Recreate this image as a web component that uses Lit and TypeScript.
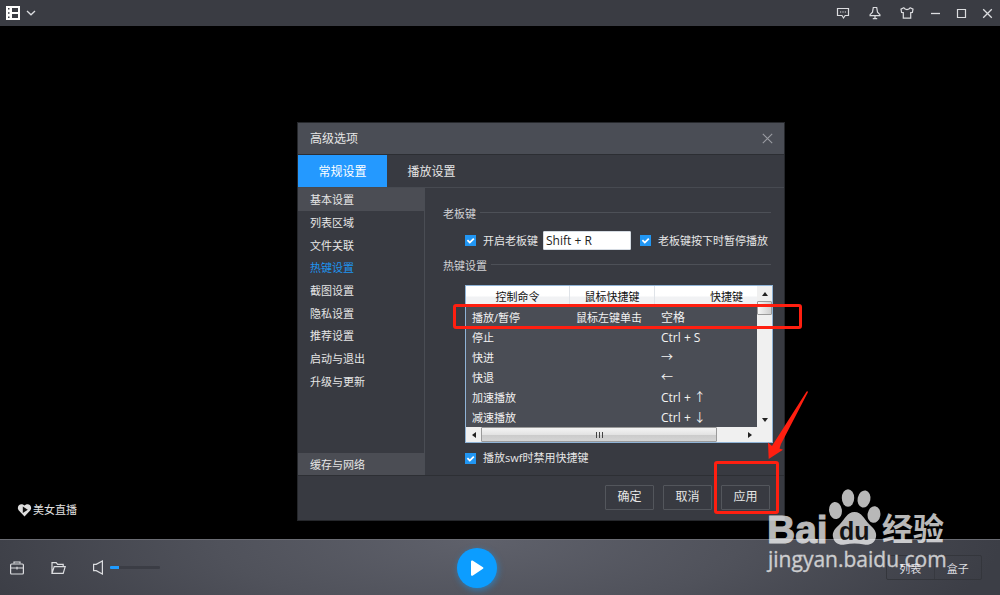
import { LitElement, html, css, svg } from "lit";
import { customElement, state } from "lit/decorators.js";
import { classMap } from "lit/directives/class-map.js";

interface Hotkey {
  command: string;
  mouse: string;
  key: string;
}

const CATEGORIES = [
  "基本设置",
  "列表区域",
  "文件关联",
  "热键设置",
  "截图设置",
  "隐私设置",
  "推荐设置",
  "启动与退出",
  "升级与更新",
];

const HOTKEYS: Hotkey[] = [
  { command: "播放/暂停", mouse: "鼠标左键单击", key: "空格" },
  { command: "停止", mouse: "", key: "Ctrl + S" },
  { command: "快进", mouse: "", key: "→" },
  { command: "快退", mouse: "", key: "←" },
  { command: "加速播放", mouse: "", key: "Ctrl + ↑" },
  { command: "减速播放", mouse: "", key: "Ctrl + ↓" },
];

const reset = css`
  * {
    box-sizing: border-box;
  }
  button,
  input {
    font: inherit;
    color: inherit;
    margin: 0;
  }
  button {
    padding: 0;
    border: 0;
    background: none;
    display: flex;
    align-items: center;
    justify-content: center;
  }
  svg {
    display: block;
    fill: none;
    stroke: currentColor;
  }
`;

@customElement("title-bar")
export class TitleBar extends LitElement {
  static styles = [
    reset,
    css`
      :host {
        display: flex;
        align-items: center;
        justify-content: space-between;
        height: 26px;
        padding: 0 5px;
        background: #3a3c43;
        color: #dcdde0;
      }
      .menu {
        gap: 5px;
      }
      .tools {
        display: flex;
        gap: 11px;
      }
      .tools button {
        width: 15px;
        height: 16px;
      }
      .tools .social {
        width: 21px;
      }
    `,
  ];

  render() {
    return html`
      <button class="menu" aria-label="主菜单">
        <svg width="16" height="16" viewBox="0 0 16 16">
          <rect x="1" y="1" width="14" height="14" fill="#fff" stroke="none" />
          <path d="M7 3h6v4H7zM7 9h6v4H7z" fill="#3a3c43" stroke="none" />
          <path d="M3 3h1.500v1.500H3zM3 7.200h1.500v1.500H3zM3 11.500h1.500V13H3z" fill="#3a3c43" stroke="none" />
        </svg>
        <svg width="10" height="6" viewBox="0 0 10 6" stroke-width="1.3"><path d="M1 1l4 3.800L9 1" /></svg>
      </button>
      <div class="tools">
        <button class="social" aria-label="反馈">
          <svg width="14" height="14" viewBox="0 0 14 14" stroke-width="1.2">
            <path d="M1.500 2.500h11v7H9.200L7.500 12 6 9.500H1.500z" />
            <path d="M4 6h1.200M6.400 6h1.200M8.800 6H10" />
          </svg>
        </button>
        <button class="social" aria-label="置顶">
          <svg width="14" height="14" viewBox="0 0 14 14" stroke-width="1.2">
            <path d="M5.300 1.500h3.400l.8 4.600 2.400 2.600v.9H2.100v-.9l2.400-2.600zM7 9.800v2.500M4.800 12.600h4.400" />
          </svg>
        </button>
        <button class="social" aria-label="换肤">
          <svg width="14" height="14" viewBox="0 0 14 14" stroke-width="1.2">
            <path d="M3.800 1.800C5 4.200 9 4.200 10.200 1.800L13 3.200l-.6 3.200-1.700.2v5.600H3.300V6.600l-1.700-.2L1 3.200z" />
          </svg>
        </button>
        <button aria-label="最小化">
          <svg width="11" height="11" viewBox="0 0 11 11" stroke-width="1.3"><path d="M1 5.500h9" /></svg>
        </button>
        <button aria-label="最大化">
          <svg width="11" height="11" viewBox="0 0 11 11" stroke-width="1.2"><path d="M1.500 1.500h8v8h-8z" /></svg>
        </button>
        <button aria-label="关闭">
          <svg width="11" height="11" viewBox="0 0 11 11" stroke-width="1.3"><path d="M1.200 1.200l8.600 8.600M9.800 1.200l-8.600 8.600" /></svg>
        </button>
      </div>
    `;
  }
}

@customElement("hotkey-list")
export class HotkeyList extends LitElement {
  static styles = [
    reset,
    css`
      :host {
        display: grid;
        grid-template-columns: minmax(0, 1fr) 15px;
        grid-template-rows: auto 15px;
        border: 1px solid #8fb3d6;
        background: #f0f0f0;
      }
      .view {
        overflow: hidden;
        background: #4a4d55;
      }
      table {
        width: 333px;
        table-layout: fixed;
        border-collapse: separate;
        border-spacing: 0;
        line-height: 16px;
      }
      .command {
        width: 104px;
      }
      .mouse {
        width: 85px;
      }
      th {
        height: 21px;
        padding: 0;
        font-weight: 400;
        color: #111;
        background: linear-gradient(#fff 45%, #f1f2f4 55%);
        border-right: 1px solid #dfe3e8;
      }
      td {
        height: 20px;
        padding: 2px 0 0 6px;
        color: #f2f2f2;
        white-space: pre;
      }
      td.key {
        font-size: 12px;
      }
      .vertical {
        display: flex;
        flex-direction: column;
        align-items: stretch;
      }
      .horizontal {
        display: flex;
      }
      .vertical button,
      .horizontal button {
        flex: none;
        width: 15px;
        height: 15px;
      }
      svg {
        fill: #222;
        stroke: none;
      }
      .thumb {
        border: 1px solid #9a9a9a;
        border-radius: 1px;
      }
      .vertical .thumb {
        height: 14px;
        background: linear-gradient(90deg, #f6f6f6, #cfcfcf);
      }
      .vertical .rest {
        flex: 1;
      }
      .horizontal .thumb {
        flex: 236 1 0;
        display: flex;
        justify-content: center;
        align-items: center;
        gap: 2px;
        background: linear-gradient(#f4f4f4, #e3e3e3 50%, #cbcbcb 55%, #d4d4d4);
      }
      .grip {
        width: 1px;
        height: 6px;
        background: #444;
      }
      .horizontal .rest {
        flex: 25 1 0;
      }
    `,
  ];

  render() {
    return html`
      <div class="view">
        <table>
          <thead>
            <tr>
              <th class="command">控制命令</th>
              <th class="mouse">鼠标快捷键</th>
              <th>快捷键</th>
            </tr>
          </thead>
          <tbody>
            ${HOTKEYS.map(
              (row) => html`<tr>
                <td>${row.command}</td>
                <td>${row.mouse}</td>
                <td class="key">${row.key}</td>
              </tr>`
            )}
          </tbody>
        </table>
      </div>
      <div class="vertical">
        <button aria-label="向上滚动"><svg width="6" height="4" viewBox="0 0 6 4"><path d="M0 4l3-4 3 4z" /></svg></button>
        <div class="thumb"></div>
        <div class="rest"></div>
        <button aria-label="向下滚动"><svg width="6" height="4" viewBox="0 0 6 4"><path d="M0 0h6L3 4z" /></svg></button>
      </div>
      <div class="horizontal">
        <button aria-label="向左滚动"><svg width="4" height="6" viewBox="0 0 4 6"><path d="M4 0v6L0 3z" /></svg></button>
        <div class="thumb"><i class="grip"></i><i class="grip"></i><i class="grip"></i></div>
        <div class="rest"></div>
        <button aria-label="向右滚动"><svg width="4" height="6" viewBox="0 0 4 6"><path d="M0 0v6l4-3z" /></svg></button>
      </div>
    `;
  }
}

@customElement("options-dialog")
export class OptionsDialog extends LitElement {
  static styles = [
    reset,
    css`
      :host {
        display: block;
        border: 1px solid #25272b;
        background: #383a41;
        color: #e6e6e6;
        font-size: 11px;
        line-height: 16px;
      }
      header {
        display: flex;
        align-items: center;
        justify-content: space-between;
        height: 32px;
        padding: 0 11px 0 12px;
        background: #4a4d55;
        border-bottom: 1px solid #2c2e33;
      }
      h1 {
        margin: 0;
        font-size: 12px;
        font-weight: 400;
      }
      .close {
        width: 12px;
        height: 12px;
        color: #9a9ca2;
      }
      .tabs {
        display: flex;
        border-bottom: 1px solid #474a51;
        font-size: 12px;
      }
      .tab {
        width: 89px;
        height: 32px;
        padding-top: 2px;
      }
      .tab.on {
        background: #2499ff;
        color: #fff;
      }
      .body {
        display: flex;
      }
      nav {
        flex: none;
        width: 127px;
        display: flex;
        flex-direction: column;
        justify-content: space-between;
        border-right: 1px solid #4a4d54;
      }
      .list {
        display: grid;
        grid-auto-rows: 1fr;
        height: 204px;
      }
      .item {
        justify-content: flex-start;
        width: 100%;
        padding: 2px 0 0 12px;
      }
      .item.band {
        background: #4b4d54;
      }
      .item.current {
        color: #1e94f0;
      }
      .last {
        height: 22px;
      }
      .panel {
        flex: 1;
        min-width: 0;
        padding: 18px 11px 9px 18px;
      }
      h2 {
        display: flex;
        gap: 4px;
        margin: 0 2px 0 0;
        font-size: 11px;
        font-weight: 400;
        color: #d0d1d4;
      }
      h2::after {
        content: "";
        flex: 1;
        height: 1px;
        margin-top: 6px;
        background: #4d5057;
      }
      .boss {
        display: flex;
        align-items: center;
        margin: 9px 0 8px 22px;
      }
      label {
        display: flex;
        align-items: center;
        gap: 7px;
      }
      .check {
        appearance: none;
        width: 11px;
        height: 11px;
        background: #2196f3
          url("data:image/svg+xml,%3Csvg xmlns='http://www.w3.org/2000/svg' viewBox='0 0 11 11'%3E%3Cpath d='M2.4 5.2l2.4 2.4 4-4' fill='none' stroke='white' stroke-width='1.8'/%3E%3C/svg%3E");
      }
      .combo {
        width: 88px;
        height: 19px;
        margin: 0 9px 0 5px;
        padding: 0 2px;
        border: 1px solid #d5dbe2;
        border-radius: 1px;
        background: #fff;
        color: #222;
        font-size: 12px;
      }
      hotkey-list {
        margin: 11px 0 7px 22px;
      }
      .swf {
        margin-left: 22px;
      }
      footer {
        display: flex;
        align-items: center;
        justify-content: flex-end;
        gap: 9px;
        height: 45px;
        padding: 0 14px 2px;
        border-top: 1px solid #2d2f34;
      }
      .action {
        width: 49px;
        height: 25px;
        border: 1px solid #53565c;
        border-radius: 1px;
        font-size: 12px;
      }
    `,
  ];

  @state() private category = 3;
  @state() private tab = 0;

  render() {
    return html`
      <header>
        <h1>高级选项</h1>
        <button class="close" aria-label="关闭">
          <svg width="11" height="11" viewBox="0 0 11 11" stroke-width="1.1"><path d="M.8.8l9.400 9.400M10.200.8L.8 10.200" /></svg>
        </button>
      </header>
      <div class="tabs" role="tablist">
        ${["常规设置", "播放设置"].map(
          (name, i) => html`<button
            role="tab"
            class=${classMap({ tab: true, on: i === this.tab })}
            @click=${() => (this.tab = i)}
          >${name}</button>`
        )}
      </div>
      <div class="body">
        <nav>
          <div class="list">
            ${CATEGORIES.map(
              (name, i) => html`<button
                class=${classMap({ item: true, band: i === 0, current: i === this.category })}
                @click=${() => (this.category = i)}
              >${name}</button>`
            )}
          </div>
          <button class="item band last">缓存与网络</button>
        </nav>
        <div class="panel">
          <h2>老板键</h2>
          <div class="boss">
            <label><input class="check" type="checkbox" checked />开启老板键</label>
            <input class="combo" type="text" aria-label="老板键组合" value="Shift + R" />
            <label><input class="check" type="checkbox" checked />老板键按下时暂停播放</label>
          </div>
          <h2>热键设置</h2>
          <hotkey-list></hotkey-list>
          <label class="swf"><input class="check" type="checkbox" checked />播放swf时禁用快捷键</label>
        </div>
      </div>
      <footer>
        <button class="action">确定</button>
        <button class="action">取消</button>
        <button class="action">应用</button>
      </footer>
    `;
  }
}

@customElement("player-bar")
export class PlayerBar extends LitElement {
  static styles = [
    reset,
    css`
      :host {
        display: flex;
        align-items: center;
        height: 56px;
        border-top: 1px solid #6a6c73;
        background: radial-gradient(ellipse 52% 260% at 48% 0, #5f616b, #50525b 50%, #3c3e46);
        color: #dcdde0;
        font-size: 11px;
      }
      .left {
        flex: 12 1 0;
        display: flex;
        align-items: center;
        padding-left: 9px;
      }
      .tool {
        width: 16px;
        height: 16px;
        margin-right: 25px;
      }
      .tool.sound {
        margin-right: 3px;
      }
      .volume {
        appearance: none;
        width: 50px;
        height: 3px;
        border-radius: 1px;
        background: linear-gradient(90deg, #1f9bff 18%, #3b3d45 18%);
      }
      .volume::-webkit-slider-thumb {
        appearance: none;
        width: 1px;
        height: 3px;
      }
      .play {
        flex: none;
        width: 40px;
        height: 40px;
        border-radius: 50%;
        background: #0c9dff;
        box-shadow: 1px 2px 6px rgba(24, 150, 240, 0.6);
        color: #fff;
      }
      .right {
        flex: 13 1 0;
        display: flex;
        justify-content: flex-end;
        padding-right: 18px;
      }
      .panels {
        display: flex;
        width: 96px;
        height: 25px;
        border: 1px solid #34363c;
        border-radius: 2px;
      }
      .panels button {
        flex: 1;
      }
      .panels button + button {
        border-left: 1px solid #373940;
      }
    `,
  ];

  render() {
    return html`
      <div class="left">
        <button class="tool" aria-label="工具箱">
          <svg width="16" height="16" viewBox="0 0 16 16" stroke-width="1.2">
            <rect x="1.600" y="4" width="12.800" height="10" rx="1" />
            <path d="M5 3.600V2h6v1.600M1.600 8h12.800M8 6.800v2.600" />
          </svg>
        </button>
        <button class="tool" aria-label="打开文件">
          <svg width="16" height="16" viewBox="0 0 16 16" stroke-width="1.2">
            <path d="M2 13.400V2.600h4.200l1.400 1.800h5.600v2.200M2 13.400l2.200-6.800h11l-2 6.800z" />
          </svg>
        </button>
        <button class="tool sound" aria-label="静音">
          <svg width="16" height="16" viewBox="0 0 16 16" stroke-width="1.2">
            <path d="M2.600 4.400h2.600L11.400 1v13L5.200 10.600H2.600z" />
          </svg>
        </button>
        <input class="volume" type="range" min="0" max="100" value="18" aria-label="音量" />
      </div>
      <button class="play" aria-label="播放">
        <svg width="16" height="18" viewBox="0 0 16 18" stroke-width="2" stroke-linejoin="round">
          <path d="M3 2.400l10.400 6.600L3 15.800z" fill="currentColor" />
        </svg>
      </button>
      <div class="right">
        <div class="panels"><button>列表</button><button>盒子</button></div>
      </div>
    `;
  }
}

@customElement("app-root")
export class AppRoot extends LitElement {
  static styles = [
    reset,
    css`
      :host {
        position: relative;
        display: flex;
        flex-direction: column;
        height: 100vh;
        overflow: hidden;
        background: #000;
        font-family: "Open Sans", "Noto Sans CJK SC", sans-serif;
      }
      main {
        flex: 1;
        display: flex;
        align-items: flex-end;
        padding: 0 17px 20px;
      }
      .live {
        display: flex;
        align-items: center;
        gap: 1px;
        color: #e0e0e0;
        font-size: 11px;
        line-height: 18px;
        text-decoration: none;
      }
      options-dialog {
        position: absolute;
        left: 297px;
        top: 122px;
        width: 488px;
      }
      .mark {
        position: absolute;
        border: 3px solid #ff1f10;
        border-radius: 3px;
        pointer-events: none;
      }
      .row-mark {
        left: 453px;
        top: 304px;
        width: 349px;
        height: 25px;
      }
      .apply-mark {
        left: 714px;
        top: 461px;
        width: 65px;
        height: 53px;
      }
      .arrow {
        position: absolute;
        left: 766px;
        top: 390px;
        stroke: none;
        pointer-events: none;
      }
      .brand {
        position: absolute;
        left: 766px;
        top: 486px;
        stroke: none;
        pointer-events: none;
        opacity: 0.72;
      }
      .brand text {
        fill: #fff;
      }
      .brand .latin {
        font: 700 39px "Liberation Sans", sans-serif;
        stroke: #fff;
        stroke-width: 1;
      }
      .brand .du {
        font: 700 25px "Liberation Sans", sans-serif;
        fill: #1c1c1e;
      }
      .brand .han {
        font: 700 31px "Noto Sans CJK SC", sans-serif;
      }
      .brand .site {
        font: 400 21px "Open Sans", sans-serif;
        stroke: #fff;
        stroke-width: 0.3;
      }
      .heart {
        stroke: none;
      }
    `,
  ];

  render() {
    return html`
      <title-bar></title-bar>
      <main>
        <a class="live" href="#live">
          <svg class="heart" width="15" height="14" viewBox="0 0 15 14">
            <path d="M7.500 13.400L1.600 7.200C-1 3.600 3.600-1.200 7.500 2.600c3.900-3.800 8.500 1 5.900 4.600z" fill="#dedede" />
            <path d="M5.800 3.600l5 3.200-5 3.200z" fill="#111" />
          </svg>
          美女直播
        </a>
      </main>
      <player-bar></player-bar>
      <options-dialog></options-dialog>
      <div class="mark row-mark"></div>
      <div class="mark apply-mark"></div>
      <svg class="arrow" width="44" height="72" viewBox="0 0 44 72">
        <path d="M40.600 1.600q1.600-.8 1.200.8L15 54l-1.500 4.500 3.500 1.200L2.700 69 2 52.500l4 3.500 2.500-4z" fill="#ff1f10" />
      </svg>
      <svg class="brand" width="190" height="96" viewBox="0 0 190 96" role="img" aria-label="Baidu 经验">
        ${svg`
          <text class="latin" x="1" y="57">Bai</text>
          <g fill="#fff">
            <ellipse cx="69.500" cy="24.500" rx="6.400" ry="8.600" transform="rotate(-8 69.500 24.500)" />
            <ellipse cx="82" cy="12" rx="6.200" ry="8.800" />
            <ellipse cx="98" cy="13" rx="6.400" ry="8.600" transform="rotate(12 98 13)" />
            <ellipse cx="108" cy="28.500" rx="6.400" ry="8.400" transform="rotate(8 108 28.500)" />
            <path d="M88.500 26C96 26 98 33 103 38c5 4.500 8 8 7 13-1.500 7-7 8.500-12 7.500-6-1.200-13-1.200-19 0-5 1-10.500-.5-12-7.500-1-5 2-8.500 7-13C79 33 81 26 88.500 26z" />
          </g>
          <text class="du" x="73" y="54">du</text>
          <text class="han" x="116" y="54">经验</text>
          <text class="site" x="2" y="81">jingyan.baidu.com</text>
        `}
      </svg>
    `;
  }
}
